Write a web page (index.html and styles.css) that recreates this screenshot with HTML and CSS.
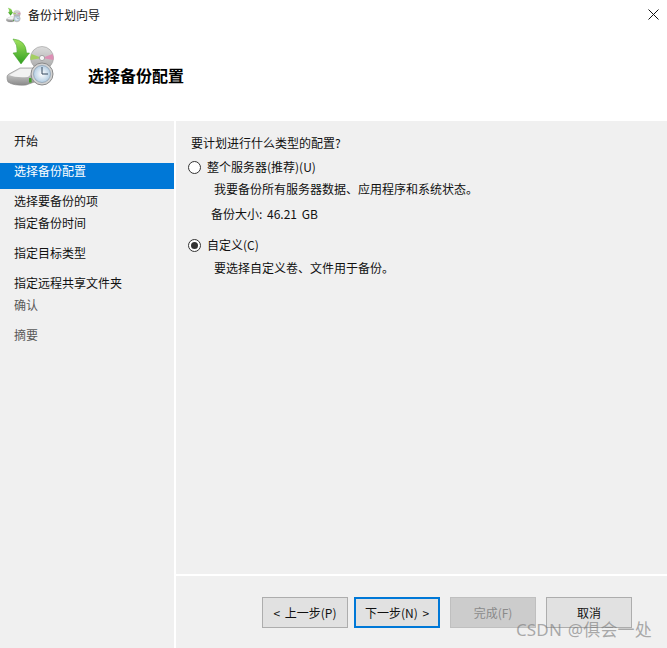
FILE: index.html
```html
<!DOCTYPE html>
<html lang="zh">
<head>
<meta charset="utf-8">
<title>备份计划向导</title>
<link rel="stylesheet" href="styles.css">
</head>
<body>
<svg class="defs" width="0" height="0" aria-hidden="true">
  <defs>
    <linearGradient id="arrow" x1="0" y1="0" x2="0" y2="1"><stop offset="0" stop-color="#a4e35f"/><stop offset="1" stop-color="#2f9e1f"/></linearGradient>
    <linearGradient id="drive" x1="0" y1="0" x2="0" y2="1"><stop offset="0" stop-color="#e6e6e6"/><stop offset="1" stop-color="#8a8a8a"/></linearGradient>
    <radialGradient id="clockface"><stop offset="0" stop-color="#ffffff"/><stop offset="1" stop-color="#b4cde2"/></radialGradient>
    <linearGradient id="disc" x1="0" y1="0" x2="0" y2="1"><stop offset="0" stop-color="#dcdcdc"/><stop offset="1" stop-color="#a8a8a8"/></linearGradient>
    <symbol id="backup" viewBox="0 0 56 56">
      <circle cx="36" cy="22" r="11.5" fill="url(#disc)" stroke="#9a9a9a" stroke-width=".6"/>
      <path d="M36 22 L46.5 18 A11.5 11.5 0 0 1 47.5 24Z" fill="#dd8fb5"/>
      <path d="M36 22 L25.5 18 A11.5 11.5 0 0 0 24.5 24Z" fill="#a4cf62"/>
      <circle cx="36" cy="22" r="2.6" fill="#f6f6f6" stroke="#808080" stroke-width=".6"/>
      <path d="M1 41 Q1 39 3 38 L14 32 L34 32 L34 44 L20 49 Q8 50 2 46 Q1 44 1 41Z" fill="url(#drive)" stroke="#858585" stroke-width=".6"/>
      <path d="M3 39 L14.5 33 L31 33 L22 41 Q10 42 3 39Z" fill="#f2f2f2"/>
      <rect x="23" y="42" width="2.6" height="4.5" fill="#45a12a"/>
      <path d="M7 3 Q20 4 20.5 17 L23.5 17 L15 28 L7 17 L11 16.5 Q12 9 7 3Z" fill="url(#arrow)" stroke="#3b9d25" stroke-width=".5"/>
      <circle cx="36" cy="38" r="11" fill="#d2d2d2" stroke="#8a8a8a" stroke-width="1"/>
      <circle cx="36" cy="38" r="8.5" fill="url(#clockface)" stroke="#7e94a8" stroke-width=".6"/>
      <path d="M36 31 V38 H42" fill="none" stroke="#33475c" stroke-width="1"/>
    </symbol>
  </defs>
</svg>
<div class="window">
  <header class="head">
    <div class="titlebar">
      <svg class="small-icon" width="17" height="17"><use href="#backup"/></svg>
      <span class="title-text">备份计划向导</span>
      <svg class="close" width="11" height="11" viewBox="0 0 11 11"><path d="M.5 .5 L10.5 10.5 M10.5 .5 L.5 10.5" stroke="#111" stroke-width="1" fill="none"/></svg>
    </div>
    <div class="banner">
      <svg class="big-icon" width="56" height="56"><use href="#backup"/></svg>
      <h1 class="page-title">选择备份配置</h1>
    </div>
  </header>
  <div class="body">
    <nav class="side">
      <div class="step">开始</div>
      <div class="step current">选择备份配置</div>
      <div class="step tight">选择要备份的项</div>
      <div class="step">指定备份时间</div>
      <div class="step">指定目标类型</div>
      <div class="step tight">指定远程共享文件夹</div>
      <div class="step muted">确认</div>
      <div class="step muted">摘要</div>
    </nav>
    <main class="main">
      <section class="content">
        <p class="question">要计划进行什么类型的配置?</p>
        <label class="option"><span class="radio"></span>整个服务器(推荐)(U)</label>
        <p class="desc">我要备份所有服务器数据、应用程序和系统状态。</p>
        <p class="size">备份大小: 46.21 GB</p>
        <label class="option second"><span class="radio on"></span>自定义(C)</label>
        <p class="desc desc-second">要选择自定义卷、文件用于备份。</p>
      </section>
      <footer class="footer">
        <button class="btn">&lt; 上一步(P)</button>
        <button class="btn primary">下一步(N) &gt;</button>
        <button class="btn disabled">完成(F)</button>
        <button class="btn">取消</button>
      </footer>
    </main>
  </div>
  <div class="watermark">CSDN @俱会一处</div>
</div>
</body>
</html>
```
FILE: styles.css
```css
* { box-sizing: border-box; }
html, body { margin: 0; padding: 0; }
body { font-family: "Noto Sans CJK SC", "Noto Sans", sans-serif; font-size: 12px; line-height: 16px; color: #111; background: #fff; overflow: hidden; }
.defs { position: absolute; }
.window { position: relative; width: 667px; height: 648px; display: flex; flex-direction: column; }
.head { height: 121px; background: #fff; }
.titlebar { height: 30px; display: flex; align-items: center; padding: 0 8px 0 6px; }
.small-icon { margin-right: 5px; }
.title-text { flex: 1; }
.close { margin-top: -1px; }
.banner { display: flex; align-items: flex-start; padding-left: 6px; }
.big-icon { margin-top: 6px; }
.page-title { margin: 0 0 0 26px; padding-top: 34px; font-size: 16px; line-height: 22px; font-weight: 700; color: #000; }
.body { flex: 1; display: flex; background: #f0f0f0; min-height: 0; }
.side { width: 174px; padding-top: 12px; background: #f0f0f0; }
.step { height: 22px; margin-bottom: 8px; padding-left: 14px; }
.step.tight { margin-bottom: 0; }
.step.current { height: 26px; margin-bottom: 4px; background: #0078d7; color: #fff; }
.step.muted { color: #595959; }
.main { flex: 1; margin-left: 2px; display: flex; flex-direction: column; background: #f0f0f0; box-shadow: -2px 0 0 #fff; }
.content { flex: 1; padding: 14px 0 0 12px; }
.content p { margin: 0; }
.question { margin-left: 3px !important; height: 16px; }
.option { display: flex; align-items: center; height: 16px; margin-top: 8px; }
.option.second { margin-top: 15px; }
.radio { width: 13px; height: 13px; margin-right: 6px; border: 1px solid #333; border-radius: 50%; background: #fff; display: flex; align-items: center; justify-content: center; }
.radio.on::after { content: ""; width: 7px; height: 7px; border-radius: 50%; background: #333; }
.desc { padding-left: 26px; margin-top: 6px !important; }
.desc-second { margin-top: 7px !important; }
.size { padding-left: 23px; margin-top: 9px !important; word-spacing: 2px; }
.footer { height: 74px; border-top: 2px solid #fff; display: flex; justify-content: flex-end; gap: 10px; padding: 21px 35px 0 0; }
.footer .btn:first-child { margin-right: -4px; }
.btn { width: 86px; height: 31px; padding: 0; border: 1px solid #adadad; background: #e1e1e1; color: #111; font: inherit; word-spacing: 2px; }
.btn.primary { border: 2px solid #0078d7; }
.btn.disabled { background: #cccccc; border-color: #bfbfbf; color: #8a8a8a; }
.watermark { position: absolute; right: 15px; bottom: 8px; font-family: "Noto Sans", "Noto Sans CJK SC", sans-serif; font-size: 17px; line-height: 20px; letter-spacing: .2px; word-spacing: 1px; color: rgba(120, 120, 120, .6); }
```
